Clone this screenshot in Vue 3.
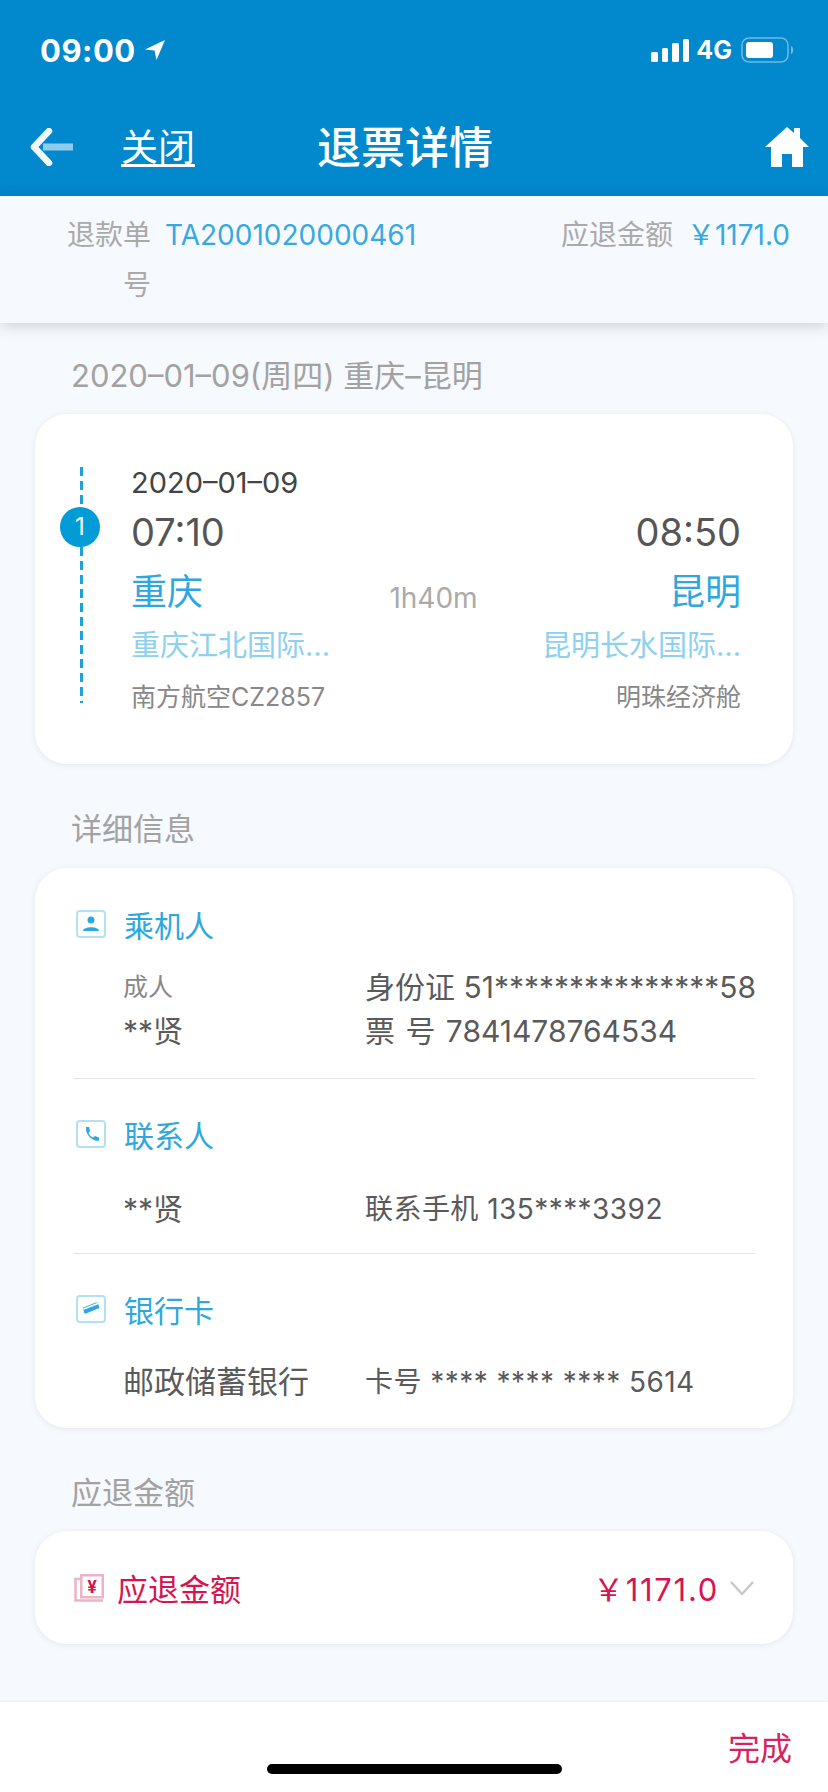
<template>
  <div class="page">
    <header class="top">
      <div class="status">
        <div class="clock">
          <span>09:00</span>
          <svg class="loc" viewBox="0 0 20 20"><path d="M0 9.500 L20 0 L11.500 20 L9.500 10.500 Z" fill="#fff" /></svg>
        </div>
        <div class="signal">
          <div class="bars">
            <i style="height: 10px"></i>
            <i style="height: 14px"></i>
            <i style="height: 19px"></i>
            <i style="height: 23px"></i>
          </div>
          <span class="net">4G</span>
          <svg class="batt" width="54" height="26" viewBox="0 0 54 26">
            <rect x="1" y="1" width="46" height="24" rx="7" fill="none" stroke="#6fb9e3" stroke-width="1.500" />
            <rect x="5" y="5" width="27" height="16" rx="3" fill="#fff" />
            <path d="M50 9 C53 10 53 16 50 17 Z" fill="#6fb9e3" />
          </svg>
        </div>
      </div>
      <nav class="nav">
        <svg class="back" width="44" height="38" viewBox="0 0 44 38">
          <rect x="14" y="15.500" width="30" height="7" fill="#8fcbed" />
          <path d="M20 3 L5 19 L20 35" fill="none" stroke="#f2f9fe" stroke-width="6.500" stroke-linecap="round" stroke-linejoin="round" />
        </svg>
        <a class="close">关闭</a>
        <h1 class="title">退票详情</h1>
        <svg class="home" width="44" height="42" viewBox="0 0 44 42">
          <path d="M22 1 L29 7 L29 2 L35 2 L35 12 L44 21 L38 21 L38 41 L27 41 L27 28 L17 28 L17 41 L6 41 L6 21 L0 21 Z" fill="#fff" />
        </svg>
      </nav>
    </header>

    <section class="summary">
      <div class="sum-label">退款单号</div>
      <div class="sum-no">TA2001020000461</div>
      <div class="sum-amt-label">应退金额</div>
      <div class="sum-amt">￥1171.0</div>
    </section>

    <main class="body">
      <h2 class="sec first">2020–01–09(周四) 重庆–昆明</h2>
      <div class="card flight">
        <div class="rail">
          <div class="dash short"></div>
          <div class="dot">1</div>
          <div class="dash long"></div>
        </div>
        <div class="trip">
          <div class="date">2020–01–09</div>
          <div class="line times">
            <span>07:10</span>
            <span>08:50</span>
          </div>
          <div class="line cities">
            <span>重庆</span>
            <span class="dur">1h40m</span>
            <span>昆明</span>
          </div>
          <div class="line ports">
            <span>重庆江北国际…</span>
            <span>昆明长水国际…</span>
          </div>
          <div class="line meta">
            <span>南方航空CZ2857</span>
            <span>明珠经济舱</span>
          </div>
        </div>
      </div>

      <h2 class="sec">详细信息</h2>
      <div class="card detail">
        <div class="block one">
          <div class="head">
            <svg class="ico" viewBox="0 0 30 28">
              <rect x="1" y="1" width="28" height="26" rx="3" fill="none" stroke="#b4e0f4" stroke-width="2" />
              <circle cx="15" cy="10" r="3.500" fill="#2ea7e0" />
              <path d="M7 21 C7 16 23 16 23 21 Z" fill="#2ea7e0" />
            </svg>
            <span>乘机人</span>
          </div>
          <div class="row gap1">
            <span class="small">成人</span>
            <span>身份证 51***************58</span>
          </div>
          <div class="row">
            <span>**贤</span>
            <span class="ticket">票 号 7841478764534</span>
          </div>
        </div>
        <div class="block two">
          <div class="head">
            <svg class="ico" viewBox="0 0 30 28">
              <rect x="1" y="1" width="28" height="26" rx="3" fill="none" stroke="#b4e0f4" stroke-width="2" />
              <path d="M10 7 L13 7 L14 11 L12.500 13 C13.500 15 15 16.500 17 17.500 L19 16 L23 17.500 L23 20.500 C17 22 9 15 10 7 Z" fill="#2ea7e0" />
            </svg>
            <span>联系人</span>
          </div>
          <div class="row gap2">
            <span>**贤</span>
            <span class="tight">联系手机 135****3392</span>
          </div>
        </div>
        <div class="block three">
          <div class="head">
            <svg class="ico" viewBox="0 0 30 28">
              <rect x="1" y="1" width="28" height="26" rx="3" fill="none" stroke="#b4e0f4" stroke-width="2" />
              <path d="M7 12.500 L20 7.500 Q21.500 7 22 8.500 L23.500 13 L10 18.500 Q8.500 19 8 17.500 Z" fill="#2ea7e0" />
              <path d="M7.500 14 L22 8.500" stroke="#fff" stroke-width="1.500" />
            </svg>
            <span>银行卡</span>
          </div>
          <div class="row gap3">
            <span class="bank">邮政储蓄银行</span>
            <span class="tight">卡号 **** **** **** 5614</span>
          </div>
        </div>
      </div>

      <h2 class="sec last">应退金额</h2>
      <div class="card refund">
        <svg class="ico" viewBox="0 0 30 28">
          <path d="M6 5 L1.500 5 L1.500 26.500 L29 26.500" fill="none" stroke="#eeb2c5" stroke-width="2.500" />
          <rect x="7.250" y="1.250" width="21.500" height="22" fill="none" stroke="#eeb2c5" stroke-width="2.500" />
          <text x="18" y="19" text-anchor="middle" class="yen">¥</text>
        </svg>
        <span class="refund-label">应退金额</span>
        <span class="refund-val">￥1171.0</span>
        <svg class="chev" width="24" height="16" viewBox="0 0 24 16">
          <path d="M1 1 L12 13 L23 1" fill="none" stroke="#c8c8c8" stroke-width="2.500" />
        </svg>
      </div>
    </main>

    <footer class="foot">
      <span class="done">完成</span>
      <div class="indicator"></div>
    </footer>
  </div>
</template>

<script setup>
</script>

<style>
html,
body {
  margin: 0;
  background: #f6f9fe;
}
</style>

<style scoped>
.page {
  position: relative;
  width: 828px;
  height: 1792px;
  overflow: hidden;
  display: flex;
  flex-direction: column;
  background: #f6f9fe;
  font-family: Inter, "Noto Sans CJK SC", sans-serif;
  color: #555;
}
.top {
  height: 196px;
  background: #0288cc;
  color: #fff;
  flex-shrink: 0;
}
.status {
  height: 100px;
  display: flex;
  justify-content: space-between;
  align-items: center;
  padding: 0 33px 0 40px;
}
.clock {
  display: flex;
  align-items: center;
  gap: 9px;
  font-size: 31px;
  font-weight: 700;
  letter-spacing: 0.5px;
}
.loc {
  width: 20px;
  height: 20px;
}
.signal {
  display: flex;
  align-items: center;
}
.bars {
  display: flex;
  align-items: flex-end;
  gap: 4px;
  height: 23px;
}
.bars i {
  width: 6.500px;
  border-radius: 1.500px;
  background: #fff;
}
.net {
  font-size: 25px;
  font-weight: 700;
  margin: 0 9px 0 7px;
}
.nav {
  height: 96px;
  display: flex;
  align-items: center;
  padding: 0 19px 0 29px;
}
.back {
  margin-top: -2px;
}
.close {
  font-size: 37px;
  line-height: 42px;
  margin-left: 48px;
  margin-top: 0;
  text-decoration: underline;
  text-underline-offset: 3px;
}
.title {
  margin: -6px 0 0 122px;
  font-size: 44px;
  font-weight: 500;
  flex: 1;
}
.home {
  margin-top: -2px;
}

.summary {
  height: 127px;
  flex-shrink: 0;
  box-sizing: border-box;
  display: flex;
  padding: 14px 38px 0 66px;
  background: #f6f9fe;
  box-shadow: 0 3px 14px rgba(0, 0, 0, 0.16);
  font-size: 28px;
  line-height: 50px;
  position: relative;
  color: #aaa;
}
.sum-label {
  width: 85px;
  text-align: right;
  height: 80px;
}
.sum-no {
  margin-left: 14px;
  flex: 1;
  color: #36a9e1;
}
.sum-amt {
  margin-left: 14px;
  color: #36a9e1;
}

.body {
  flex: 1;
  padding: 0 35px;
}
.sec {
  margin: 0;
  padding: 45px 0 19px 36px;
  font-size: 31px;
  line-height: 40px;
  font-weight: 400;
  color: #a2a2a2;
}
.sec.first {
  padding-top: 33px;
  padding-bottom: 18px;
}
.sec.last {
  padding-bottom: 18px;
}
.card {
  background: #fff;
  border-radius: 32px;
  box-shadow: 0 1px 6px rgba(0, 0, 0, 0.08);
}

.flight {
  height: 350px;
  box-sizing: border-box;
  display: flex;
  padding: 53px 52px 0 25px;
}
.rail {
  width: 40px;
  display: flex;
  flex-direction: column;
  align-items: center;
  flex-shrink: 0;
}
.dash {
  width: 3px;
  margin-left: 3px;
  background: repeating-linear-gradient(to bottom, #1ea0d8 0 9px, transparent 9px 14px);
}
.dash.short {
  height: 40px;
}
.dash.long {
  height: 156px;
}
.dot {
  width: 40px;
  height: 40px;
  border-radius: 50%;
  background: #019bd6;
  color: #fff;
  font-size: 24px;
  line-height: 40px;
  text-align: center;
  flex-shrink: 0;
}
.trip {
  flex: 1;
  min-width: 0;
  margin-left: 31px;
  margin-top: -4px;
}
.date {
  font-size: 29px;
  line-height: 40px;
  color: #444;
}
.line {
  display: flex;
  justify-content: space-between;
  align-items: center;
}
.times {
  margin-top: 5px;
  height: 48px;
  font-size: 38px;
  color: #555;
}
.cities {
  margin-top: 7px;
  height: 52px;
  font-size: 36px;
  color: #2ea7e0;
}
.dur {
  font-size: 28px;
  color: #aaa;
  margin-top: 18px;
  margin-right: 5px;
}
.ports {
  margin-top: 5px;
  height: 46px;
  font-size: 29px;
  color: #8ed0ee;
}
.meta {
  margin-top: 9px;
  height: 40px;
  font-size: 25px;
  color: #888;
}

.detail {
  padding: 36px 38px 24px 39px;
}
.block.one {
  padding-bottom: 25px;
  border-bottom: 1px solid #e4e4e4;
}
.block.two {
  padding-top: 35px;
  padding-bottom: 22px;
  border-bottom: 1px solid #e4e4e4;
}
.block.three {
  padding-top: 35px;
}
.head {
  display: flex;
  align-items: center;
  height: 40px;
  font-size: 30px;
  color: #2ea7e0;
  gap: 18px;
  padding-left: 2px;
}
.ico {
  width: 30px;
  height: 28px;
  flex-shrink: 0;
}
.row {
  display: grid;
  grid-template-columns: 242px 1fr;
  padding-left: 49px;
  height: 44px;
  line-height: 44px;
  font-size: 30px;
  color: #5a5a5a;
  white-space: nowrap;
}
.gap1 {
  margin-top: 21px;
}
.gap2 {
  margin-top: 33px;
}
.gap3 {
  margin-top: 31px;
}
.small {
  font-size: 25px;
  color: #888;
}
.ticket {
  word-spacing: 2px;
}
.bank {
  font-size: 31px;
}
.tight {
  font-size: 28px;
  letter-spacing: 0.45px;
}

.refund {
  height: 113px;
  box-sizing: border-box;
  display: flex;
  align-items: center;
  padding: 0 39px 0 39px;
  font-size: 31px;
  color: #d6144f;
}
.yen {
  font-size: 17px;
  font-weight: 700;
  fill: #d6144f;
}
.refund-label {
  margin-left: 13px;
  flex: 1;
}
.refund-val {
  margin-right: 11px;
  letter-spacing: 1.700px;
}
.chev {
  flex-shrink: 0;
  margin-top: 2px;
}

.foot {
  height: 90px;
  flex-shrink: 0;
  display: flex;
  justify-content: flex-end;
  align-items: center;
  padding-right: 36px;
  background: #fff;
  box-shadow: 0 -1px 3px rgba(0, 0, 0, 0.06);
}
.done {
  font-size: 32px;
  color: #d6235f;
  margin-top: -2px;
}
.indicator {
  position: absolute;
  left: 267px;
  bottom: 18px;
  width: 295px;
  height: 10px;
  border-radius: 5px;
  background: #000;
}
</style>
